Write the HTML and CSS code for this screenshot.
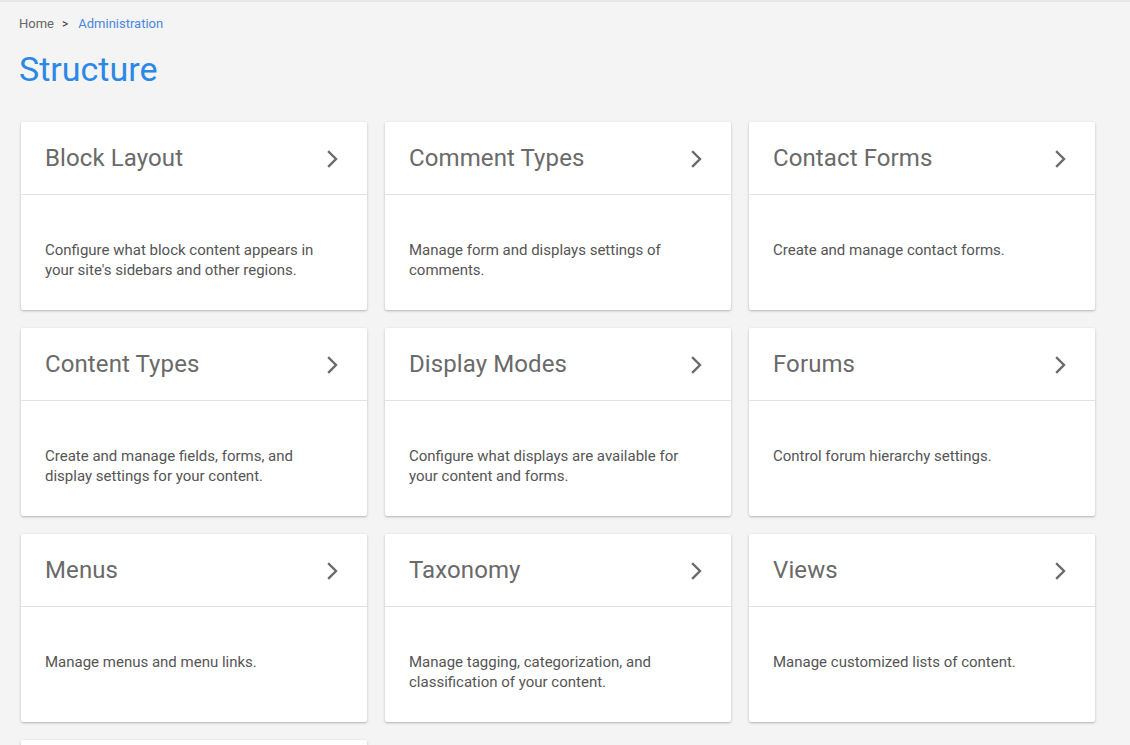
FILE: index.html
```html
<!DOCTYPE html>
<html lang="en">
<head>
<meta charset="utf-8">
<title>Structure</title>
<link rel="stylesheet" href="styles.css">
</head>
<body>
<div class="topline"></div>
<main class="page">
  <nav class="breadcrumb">
    <a class="crumb-home" href="#">Home</a>
    <span class="crumb-sep">&gt;</span>
    <a class="crumb-current" href="#">Administration</a>
  </nav>
  <h1 class="page-title">Structure</h1>
  <div class="grid">
    <a class="card" href="#">
      <div class="card-head"><span class="card-title">Block Layout</span><svg class="chev" viewBox="0 0 12 18"><polyline points="2,2 9,9 2,16"/></svg></div>
      <div class="card-body">Configure what block content appears in your site's sidebars and other regions.</div>
    </a>
    <a class="card" href="#">
      <div class="card-head"><span class="card-title">Comment Types</span><svg class="chev" viewBox="0 0 12 18"><polyline points="2,2 9,9 2,16"/></svg></div>
      <div class="card-body">Manage form and displays settings of comments.</div>
    </a>
    <a class="card" href="#">
      <div class="card-head"><span class="card-title">Contact Forms</span><svg class="chev" viewBox="0 0 12 18"><polyline points="2,2 9,9 2,16"/></svg></div>
      <div class="card-body">Create and manage contact forms.</div>
    </a>
    <a class="card" href="#">
      <div class="card-head"><span class="card-title">Content Types</span><svg class="chev" viewBox="0 0 12 18"><polyline points="2,2 9,9 2,16"/></svg></div>
      <div class="card-body">Create and manage fields, forms, and display settings for your content.</div>
    </a>
    <a class="card" href="#">
      <div class="card-head"><span class="card-title">Display Modes</span><svg class="chev" viewBox="0 0 12 18"><polyline points="2,2 9,9 2,16"/></svg></div>
      <div class="card-body">Configure what displays are available for your content and forms.</div>
    </a>
    <a class="card" href="#">
      <div class="card-head"><span class="card-title">Forums</span><svg class="chev" viewBox="0 0 12 18"><polyline points="2,2 9,9 2,16"/></svg></div>
      <div class="card-body">Control forum hierarchy settings.</div>
    </a>
    <a class="card" href="#">
      <div class="card-head"><span class="card-title">Menus</span><svg class="chev" viewBox="0 0 12 18"><polyline points="2,2 9,9 2,16"/></svg></div>
      <div class="card-body">Manage menus and menu links.</div>
    </a>
    <a class="card" href="#">
      <div class="card-head"><span class="card-title">Taxonomy</span><svg class="chev" viewBox="0 0 12 18"><polyline points="2,2 9,9 2,16"/></svg></div>
      <div class="card-body">Manage tagging, categorization, and classification of your content.</div>
    </a>
    <a class="card" href="#">
      <div class="card-head"><span class="card-title">Views</span><svg class="chev" viewBox="0 0 12 18"><polyline points="2,2 9,9 2,16"/></svg></div>
      <div class="card-body">Manage customized lists of content.</div>
    </a>
    <a class="card" href="#">
      <div class="card-head"><span class="card-title">&nbsp;</span></div>
      <div class="card-body"></div>
    </a>
  </div>
</main>
</body>
</html>
```
FILE: styles.css
```css
html, body {
  margin: 0;
  padding: 0;
  background: #f4f4f4;
  font-family: Roboto, "Liberation Sans", Arial, sans-serif;
  overflow: hidden;
}
.topline {
  height: 2px;
  background: #e6e6e6;
}
.page {
  padding: 0 19px;
}
.breadcrumb {
  display: flex;
  align-items: center;
  gap: 8px;
  height: 16px;
  margin-top: 14px;
  font-size: 13px;
  line-height: 16px;
}
.crumb-home {
  color: #666;
  text-decoration: none;
}
.crumb-sep {
  color: #333;
  font-size: 12px;
  padding: 0 2px 0 0;
}
.crumb-current {
  color: #4a88dd;
  text-decoration: none;
}
.page-title {
  margin: 0;
  margin-top: 17px;
  font-size: 34px;
  line-height: 40px;
  font-weight: 400;
  color: #2b88e4;
}
.grid {
  display: grid;
  grid-template-columns: repeat(3, 346px);
  gap: 18px;
  margin-top: 33px;
  margin-left: 2px;
}
.card {
  display: block;
  height: 188px;
  background: #fff;
  border-radius: 2px;
  box-shadow: 0 1px 3px rgba(0, 0, 0, 0.22), 0 1px 1px rgba(0, 0, 0, 0.06);
  text-decoration: none;
}
.card-head {
  display: flex;
  align-items: center;
  justify-content: space-between;
  height: 72px;
  padding: 0 28px 0 24px;
  border-bottom: 1px solid #e2e2e2;
}
.card-title {
  font-size: 24px;
  color: #6a6a6a;
  letter-spacing: 0.1px;
}
.chev {
  width: 12px;
  height: 18px;
  margin-top: 2px;
  fill: none;
  stroke: #6a6a6a;
  stroke-width: 2.4;
  stroke-linecap: square;
  stroke-linejoin: miter;
}
.card-body {
  padding: 45px 24px 0 24px;
  font-size: 15px;
  line-height: 20px;
  color: #555;
}
```
